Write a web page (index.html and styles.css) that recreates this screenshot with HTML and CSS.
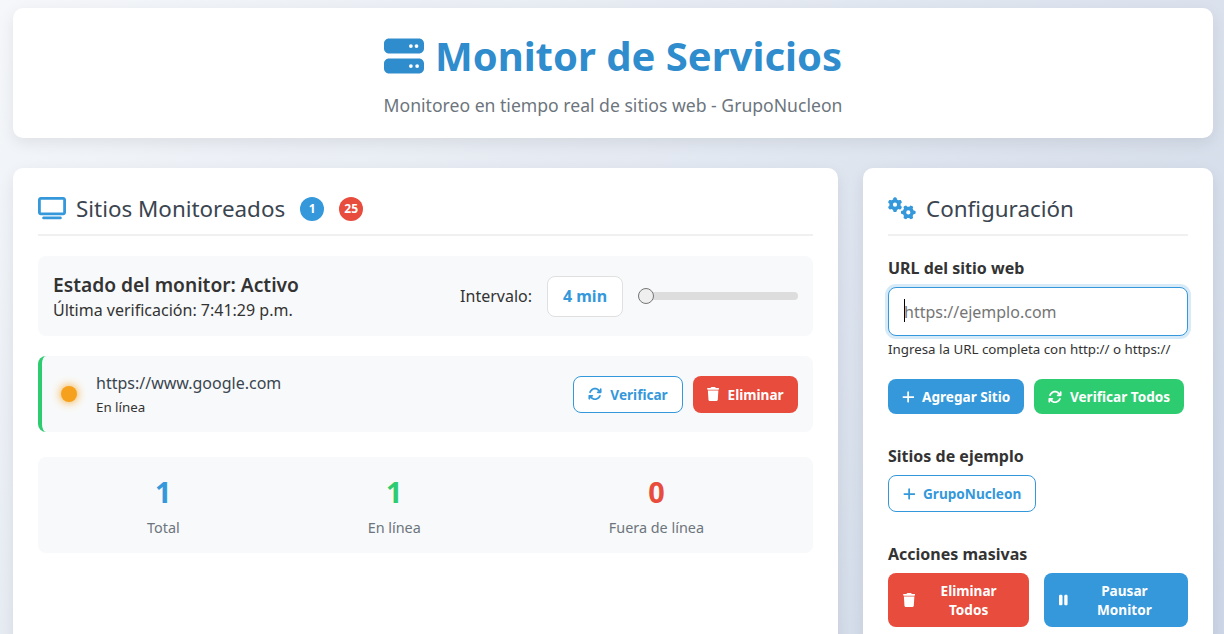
FILE: index.html
```html
<!DOCTYPE html>
<html lang="es">
<head>
<meta charset="utf-8">
<title>Monitor de Servicios</title>
<link rel="stylesheet" href="styles.css">
</head>
<body>
<svg class="defs" width="0" height="0" aria-hidden="true">
<symbol id="i-server" viewBox="0 0 512 512"><path d="M64 32C28.7 32 0 60.7 0 96v64c0 35.3 28.7 64 64 64H448c35.3 0 64-28.7 64-64V96c0-35.3-28.7-64-64-64H64zm280 72a24 24 0 1 1 0 48 24 24 0 1 1 0-48zm48 24a24 24 0 1 1 48 0 24 24 0 1 1 -48 0zM64 288c-35.3 0-64 28.7-64 64v64c0 35.3 28.7 64 64 64H448c35.3 0 64-28.7 64-64V352c0-35.3-28.7-64-64-64H64zm280 72a24 24 0 1 1 0 48 24 24 0 1 1 0-48zm56 24a24 24 0 1 1 48 0 24 24 0 1 1 -48 0z"/></symbol>
<symbol id="i-tv" viewBox="0 0 640 512"><path d="M64 64V352H576V64H64zM0 64C0 28.7 28.7 0 64 0H576c35.3 0 64 28.7 64 64V352c0 35.3-28.7 64-64 64H64c-35.3 0-64-28.7-64-64V64zM128 448H512c17.7 0 32 14.3 32 32s-14.3 32-32 32H128c-17.7 0-32-14.3-32-32s14.3-32 32-32z"/></symbol>
<symbol id="i-gears" viewBox="0 0 640 512"><path d="M308.5 135.3c7.1-6.3 9.9-16.2 6.2-25c-2.3-5.3-4.8-10.5-7.6-15.5L304 89.4c-3-5-6.3-9.9-9.8-14.6c-5.7-7.6-15.7-10.1-24.7-7.1l-28.2 9.3c-10.7-8.8-23-16-36.2-20.9L199 27.1c-1.9-9.3-9.1-16.7-18.5-17.8C173.9 8.4 167.2 8 160.4 8h-.7c-6.8 0-13.5 .4-20.1 1.2c-9.4 1.1-16.6 8.6-18.5 17.8L115 56.1c-13.3 5-25.5 12.1-36.2 20.9L50.5 67.8c-9-3-19-.5-24.7 7.1c-3.5 4.7-6.8 9.6-9.9 14.6l-3 5.3c-2.8 5-5.3 10.2-7.6 15.6c-3.7 8.7-.9 18.6 6.2 25l22.2 19.8C32.6 161.9 32 168.9 32 176s.6 14.1 1.7 20.9L11.5 216.7c-7.1 6.3-9.9 16.2-6.2 25c2.3 5.3 4.8 10.5 7.6 15.6l3 5.2c3 5.1 6.3 9.9 9.9 14.6c5.7 7.6 15.7 10.1 24.7 7.1l28.2-9.3c10.7 8.8 23 16 36.2 20.9l6.1 29.1c1.9 9.3 9.1 16.7 18.5 17.8c6.7 .8 13.5 1.2 20.4 1.2s13.7-.4 20.4-1.2c9.4-1.1 16.6-8.6 18.5-17.8l6.1-29.1c13.3-5 25.5-12.1 36.2-20.9l28.2 9.3c9 3 19 .5 24.7-7.1c3.5-4.7 6.8-9.5 9.8-14.6l3.1-5.4c2.8-5 5.3-10.2 7.6-15.5c3.7-8.7 .9-18.6-6.2-25l-22.2-19.8c1.1-6.8 1.7-13.8 1.7-20.9s-.6-14.1-1.7-20.9l22.2-19.8zM112 176a48 48 0 1 1 96 0 48 48 0 1 1 -96 0zM504.7 500.5c6.3 7.1 16.2 9.9 25 6.2c5.3-2.3 10.5-4.8 15.5-7.6l5.4-3.1c5-3 9.9-6.3 14.6-9.8c7.6-5.7 10.1-15.7 7.1-24.7l-9.3-28.2c8.8-10.7 16-23 20.9-36.2l29.1-6.1c9.3-1.9 16.7-9.1 17.8-18.5c.8-6.7 1.2-13.5 1.2-20.4s-.4-13.7-1.2-20.4c-1.1-9.4-8.6-16.6-17.8-18.5L583.9 307c-5-13.3-12.1-25.5-20.9-36.2l9.3-28.2c3-9 .5-19-7.1-24.7c-4.7-3.5-9.6-6.8-14.6-9.9l-5.3-3c-5-2.8-10.2-5.3-15.6-7.6c-8.7-3.7-18.6-.9-25 6.2l-19.8 22.2c-6.8-1.1-13.8-1.7-20.9-1.7s-14.1 .6-20.9 1.7l-19.8-22.2c-6.3-7.1-16.2-9.9-25-6.2c-5.3 2.3-10.5 4.8-15.6 7.6l-5.2 3c-5.1 3-9.9 6.3-14.6 9.9c-7.6 5.7-10.1 15.7-7.1 24.7l9.3 28.2c-8.8 10.7-16 23-20.9 36.2L315.1 313c-9.3 1.9-16.7 9.1-17.8 18.5c-.8 6.7-1.2 13.5-1.2 20.4s.4 13.7 1.2 20.4c1.1 9.4 8.6 16.6 17.8 18.5l29.1 6.1c5 13.3 12.1 25.5 20.9 36.2l-9.3 28.2c-3 9-.5 19 7.1 24.7c4.7 3.5 9.5 6.8 14.6 9.8l5.4 3.1c5 2.8 10.2 5.3 15.5 7.6c8.7 3.7 18.6 .9 25-6.2l19.8-22.2c6.8 1.1 13.8 1.7 20.9 1.7s14.1-.6 20.9-1.7l19.8 22.2zM464 304a48 48 0 1 1 0 96 48 48 0 1 1 0-96z"/></symbol>
<symbol id="i-sync" viewBox="0 0 512 512"><path d="M105.1 202.6c7.7-21.8 20.2-42.3 37.8-59.8c62.5-62.5 163.8-62.5 226.3 0L386.3 160H352c-17.7 0-32 14.3-32 32s14.3 32 32 32H463.5c0 0 0 0 0 0h.4c17.7 0 32-14.3 32-32V80c0-17.7-14.3-32-32-32s-32 14.3-32 32v35.2L414.4 97.6c-87.5-87.5-229.3-87.5-316.8 0C73.2 122 55.6 150.7 44.8 181.4c-5.9 16.7 2.9 34.9 19.5 40.8s34.9-2.9 40.8-19.5zM39 289.3c-5 1.5-9.8 4.2-13.7 8.2c-4 4-6.7 8.8-8.1 14c-.3 1.2-.6 2.5-.8 3.8c-.3 1.7-.4 3.4-.4 5.1V432c0 17.7 14.3 32 32 32s32-14.3 32-32V396.9l17.6 17.5 0 0c87.5 87.4 229.3 87.4 316.7 0c24.4-24.4 42.1-53.1 52.9-83.7c5.9-16.7-2.9-34.9-19.5-40.8s-34.9 2.9-40.8 19.5c-7.7 21.8-20.2 42.3-37.8 59.8c-62.5 62.5-163.8 62.5-226.3 0l-.1-.1L125.6 352H160c17.7 0 32-14.3 32-32s-14.3-32-32-32H48.4c-1.6 0-3.2 .1-4.8 .3s-3.1 .5-4.6 1z"/></symbol>
<symbol id="i-trash" viewBox="0 0 448 512"><path d="M135.2 17.7L128 32H32C14.3 32 0 46.3 0 64S14.3 96 32 96H416c17.7 0 32-14.3 32-32s-14.3-32-32-32H320l-7.2-14.3C307.4 6.8 296.3 0 284.2 0H163.8c-12.1 0-23.2 6.8-28.6 17.7zM416 128H32L53.2 467c1.6 25.3 22.6 45 47.9 45H346.9c25.3 0 46.3-19.7 47.9-45L416 128z"/></symbol>
<symbol id="i-plus" viewBox="0 0 448 512"><path d="M256 80c0-17.7-14.3-32-32-32s-32 14.3-32 32V224H48c-17.7 0-32 14.3-32 32s14.3 32 32 32H192V432c0 17.7 14.3 32 32 32s32-14.3 32-32V288H432c17.7 0 32-14.3 32-32s-14.3-32-32-32H256V80z"/></symbol>
<symbol id="i-pause" viewBox="0 0 320 512"><path d="M48 64C21.5 64 0 85.5 0 112V400c0 26.5 21.5 48 48 48H80c26.5 0 48-21.5 48-48V112c0-26.5-21.5-48-48-48H48zm192 0c-26.5 0-48 21.5-48 48V400c0 26.5 21.5 48 48 48h32c26.5 0 48-21.5 48-48V112c0-26.5-21.5-48-48-48H240z"/></symbol>
</svg>
<div class="container">
  <header class="hero">
    <h1 class="hero-title"><svg class="hero-icon"><use href="#i-server"/></svg>Monitor de Servicios</h1>
    <p class="hero-sub">Monitoreo en tiempo real de sitios web - GrupoNucleon</p>
  </header>
  <main class="layout">
    <section class="card">
      <h2 class="card-title">
        <svg class="title-icon title-icon-tv"><use href="#i-tv"/></svg>
        <span>Sitios Monitoreados</span>
        <span class="badge badge-blue">1</span>
        <span class="badge badge-red">25</span>
      </h2>
      <div class="status-bar">
        <div class="status-text">
          <div class="status-main">Estado del monitor: Activo</div>
          <div class="status-last">Última verificación: 7:41:29 p.m.</div>
        </div>
        <div class="interval">
          <span class="interval-label">Intervalo:</span>
          <span class="interval-value">4 min</span>
          <input class="interval-range" type="range" min="4" max="60" value="4" aria-label="Intervalo">
        </div>
      </div>
      <div class="site">
        <span class="dot"></span>
        <div class="site-info">
          <div class="site-url">https://www.google.com</div>
          <div class="site-state">En línea</div>
        </div>
        <div class="site-actions">
          <button class="btn btn-outline btn-verify"><svg class="btn-icon ic-sync"><use href="#i-sync"/></svg>Verificar</button>
          <button class="btn btn-red btn-delete"><svg class="btn-icon ic-narrow"><use href="#i-trash"/></svg>Eliminar</button>
        </div>
      </div>
      <div class="stats">
        <div class="stat"><div class="stat-num c-blue">1</div><div class="stat-label">Total</div></div>
        <div class="stat"><div class="stat-num c-green">1</div><div class="stat-label">En línea</div></div>
        <div class="stat"><div class="stat-num c-red">0</div><div class="stat-label">Fuera de línea</div></div>
      </div>
    </section>
    <aside class="card">
      <h2 class="card-title">
        <svg class="title-icon title-icon-gears"><use href="#i-gears"/></svg>
        <span>Configuración</span>
      </h2>
      <label class="field-label" for="url">URL del sitio web</label>
      <div class="input-wrap">
        <input class="url-input" id="url" type="text" placeholder="https://ejemplo.com">
        <span class="caret"></span>
      </div>
      <p class="hint">Ingresa la URL completa con http:// o https://</p>
      <div class="btn-row">
        <button class="btn btn-blue btn-add"><svg class="btn-icon ic-narrow"><use href="#i-plus"/></svg>Agregar Sitio</button>
        <button class="btn btn-green btn-all"><svg class="btn-icon ic-sync"><use href="#i-sync"/></svg>Verificar Todos</button>
      </div>
      <div class="section-label">Sitios de ejemplo</div>
      <button class="btn btn-outline btn-sample"><svg class="btn-icon ic-narrow"><use href="#i-plus"/></svg>GrupoNucleon</button>
      <div class="section-label section-label-mass">Acciones masivas</div>
      <div class="mass-row">
        <button class="btn btn-red btn-mass btn-mass-del"><svg class="btn-icon ic-narrow"><use href="#i-trash"/></svg><span class="mass-text">Eliminar Todos</span></button>
        <button class="btn btn-blue btn-mass btn-mass-pause"><svg class="btn-icon ic-pause"><use href="#i-pause"/></svg><span class="mass-text">Pausar Monitor</span></button>
      </div>
    </aside>
  </main>
</div>
</body>
</html>
```
FILE: styles.css
```css
* { box-sizing: border-box; }
html, body { height: 100%; }
body {
  margin: 0;
  padding: 8px 11px 0 13px;
  overflow: hidden;
  font-family: "Noto Sans", sans-serif;
  color: #333;
  background: linear-gradient(135deg, #f5f7fa 0%, #c3cfe2 100%);
  background-size: 1224px 1060px;
}
.defs { position: absolute; }
svg { fill: currentColor; display: block; flex: none; }
.container { width: 1200px; }
.hero {
  height: 130px;
  background: #fff;
  border-radius: 10px;
  box-shadow: 0 5px 15px rgba(0,0,0,.08);
  text-align: center;
  padding-top: 20px;
  margin-bottom: 30px;
}
.hero-title {
  margin: 0;
  font-size: 40px;
  line-height: 56px;
  font-weight: 700;
  color: #2f8ccd;
  display: flex;
  justify-content: center;
  align-items: center;
  gap: 11px;
}
.hero-icon { width: 40px; height: 40px; }
.hero-sub { margin: 9px 0 0; font-size: 17.6px; line-height: 24px; color: #6c757d; }
.layout { display: grid; grid-template-columns: 825px 350px; gap: 25px; }
.card {
  background: #fff;
  border-radius: 10px;
  box-shadow: 0 5px 15px rgba(0,0,0,.08);
  padding: 25px;
  height: 600px;
}
.card-title {
  margin: 0 0 20px;
  height: 43px;
  padding-bottom: 10px;
  border-bottom: 2px solid #f0f0f0;
  display: flex;
  align-items: center;
  font-size: 22.4px;
  font-weight: 400;
  color: #3a4550;
}
.title-icon { color: #3498db; }
.title-icon-tv { width: 28px; height: 22.4px; margin-right: 10px; }
.title-icon-gears { width: 28px; height: 22.4px; margin-right: 10px; }
.badge {
  width: 24px; height: 24px;
  border-radius: 50%;
  color: #fff;
  font-size: 12px;
  font-weight: 700;
  display: flex;
  align-items: center;
  justify-content: center;
}
.badge-blue { background: #3498db; margin-left: 15px; }
.badge-red { background: #e74c3c; margin-left: 15px; }
.status-bar {
  height: 80px;
  background: #f8f9fa;
  border-radius: 8px;
  padding: 0 15px;
  display: flex;
  align-items: center;
  justify-content: space-between;
  margin-bottom: 20px;
}
.status-main { font-size: 19.2px; line-height: 26px; font-weight: 600; color: #333; }
.status-last { font-size: 16px; line-height: 22px; margin-top: 1px; color: #333; }
.interval { display: flex; align-items: center; }
.interval-label { font-size: 16px; margin-right: 15px; }
.interval-value {
  width: 76px; height: 41px;
  background: #fff;
  border: 1px solid #e0e0e0;
  border-radius: 8px;
  color: #3498db;
  font-size: 16px;
  font-weight: 700;
  display: flex;
  align-items: center;
  justify-content: center;
  margin-right: 15px;
}
.interval-range {
  -webkit-appearance: none;
  appearance: none;
  width: 160px;
  height: 8px;
  margin: 0;
  background: #ddd;
  border-radius: 4px;
  outline: none;
}
.interval-range::-webkit-slider-thumb {
  -webkit-appearance: none;
  width: 16px; height: 16px;
  border-radius: 50%;
  background: #efefef;
  border: 1px solid #767676;
}
.site {
  height: 76px;
  background: #f8f9fa;
  border-left: 4px solid #2ecc71;
  border-radius: 8px;
  padding: 0 15px;
  display: flex;
  align-items: center;
  margin-bottom: 25px;
}
.dot {
  width: 16px; height: 16px;
  border-radius: 50%;
  background: #f5a11d;
  box-shadow: 0 0 10px #f5a11d;
  margin-right: 19px;
  margin-left: 4px;
}
.site-info { flex: 1; }
.site-url { font-size: 16px; line-height: 22px; color: #3a4550; }
.site-state { font-size: 13.33px; line-height: 18px; margin-top: 4px; color: #333; }
.site-actions { display: flex; gap: 10px; }
.btn {
  display: inline-flex;
  align-items: center;
  justify-content: center;
  border: 0;
  border-radius: 8px;
  font-family: inherit;
  font-size: 13.6px;
  font-weight: 700;
  color: #fff;
  padding: 0;
}
.btn-icon { height: 14px; margin-right: 8px; }
.ic-sync { width: 14px; }
.ic-narrow { width: 12.25px; }
.ic-pause { width: 8.75px; }
.btn-outline { background: #fff; border: 1px solid #3498db; color: #3498db; }
.btn-red { background: #e74c3c; }
.btn-blue { background: #3498db; }
.btn-green { background: #2ecc71; }
.btn-verify { width: 110px; height: 37px; }
.btn-delete { width: 105px; height: 37px; }
.stats {
  height: 96px;
  background: #f8f9fa;
  border-radius: 8px;
  display: flex;
  justify-content: space-around;
  padding: 0 15px;
  text-align: center;
  align-items: center;
}
.stat-num { font-size: 28.8px; line-height: 39px; font-weight: 700; }
.stat-label { font-size: 14.4px; line-height: 20px; color: #6c757d; margin-top: 7px; }
.c-blue { color: #3498db; }
.c-green { color: #2ecc71; }
.c-red { color: #e74c3c; }
.field-label, .section-label {
  display: block;
  font-size: 16px;
  line-height: 24px;
  font-weight: 700;
  color: #333;
}
.field-label { margin-bottom: 7px; }
.input-wrap { position: relative; }
.url-input {
  display: block;
  width: 100%;
  height: 49px;
  padding: 0 15px;
  border: 1px solid #3498db;
  border-radius: 8px;
  box-shadow: 0 0 0 3px rgba(52,152,219,.2);
  font-family: inherit;
  font-size: 16px;
  outline: none;
  background: #fff;
}
.url-input::placeholder { color: #757575; opacity: 1; }
.caret { position: absolute; left: 16px; top: 12px; width: 1px; height: 23px; background: #000; }
.hint { margin: 4px 0 0; font-size: 13.33px; line-height: 18px; color: #333; }
.btn-row { display: flex; gap: 10px; margin-top: 21px; }
.btn-add { width: 136px; height: 35px; }
.btn-all { width: 150px; height: 35px; }
.section-label { margin-top: 30px; margin-bottom: 7px; }
.btn-sample { width: 148px; height: 37px; }
.section-label-mass { margin-top: 30px; margin-bottom: 7px; }
.mass-row { display: flex; gap: 15px; }
.btn-mass { height: 54px; line-height: 19px; justify-content: flex-start; padding: 0 15px; }
.btn-mass-del { width: 141px; }
.btn-mass-pause { width: 144px; }
.mass-text { flex: 1; text-align: center; }
```
